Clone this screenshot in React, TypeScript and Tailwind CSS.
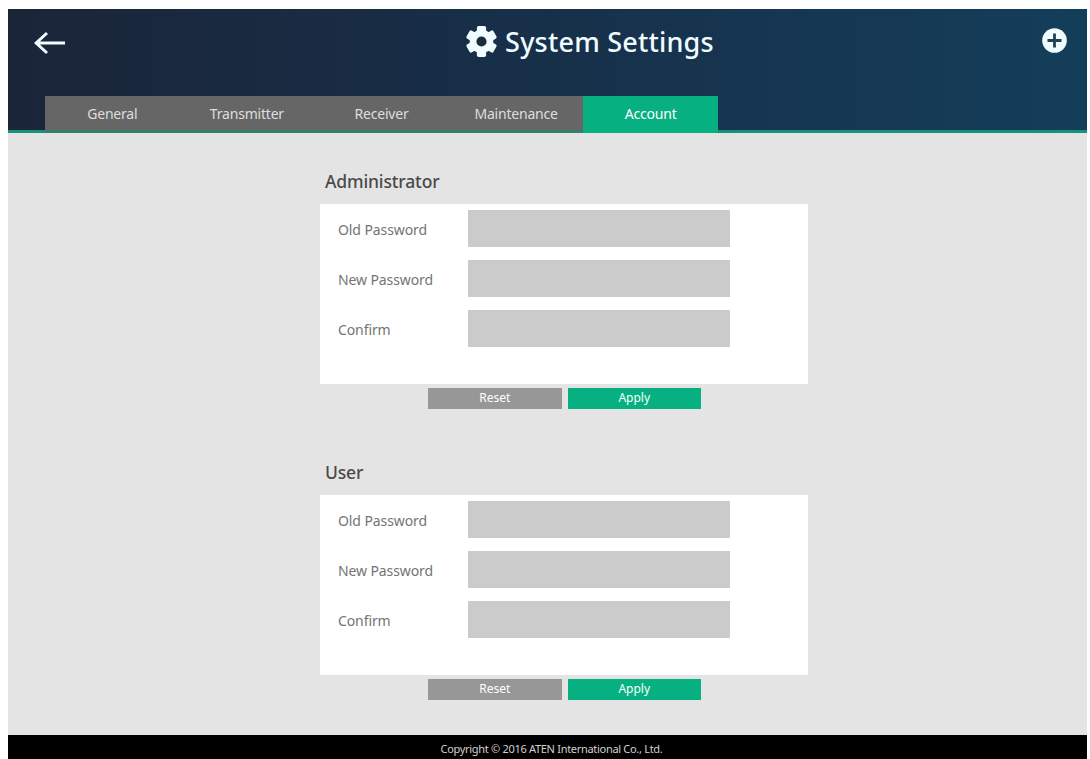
import React from "react";

const tabs = ["General", "Transmitter", "Receiver", "Maintenance", "Account"];
const fields = ["Old Password", "New Password", "Confirm"];

function BackArrow() {
  return (
    <svg className="h-6 w-8" viewBox="0 0 32 24" fill="none" stroke="currentColor" strokeWidth="3">
      <path d="M32 12H3M14 2L3.2 12 14 22" />
    </svg>
  );
}

function Gear() {
  return (
    <svg className="size-[31px]" viewBox="-15.5 -15.5 31 31">
      <g fill="currentColor">
        <rect x="-4.6" y="-15.5" width="9.2" height="31" rx="1.8" />
        <rect x="-4.6" y="-15.5" width="9.2" height="31" rx="1.8" transform="rotate(60)" />
        <rect x="-4.6" y="-15.5" width="9.2" height="31" rx="1.8" transform="rotate(120)" />
        <circle r="11.8" />
      </g>
      <circle r="5.1" fill="#182c3e" />
    </svg>
  );
}

function PlusBadge() {
  return (
    <svg className="size-[25px]" viewBox="0 0 25 25">
      <circle cx="12.5" cy="12.5" r="12.3" fill="#f0fcff" />
      <path d="M12.5 5.5v14M5.5 12.5h14" stroke="#1d4450" strokeWidth="2.8" />
    </svg>
  );
}

function PasswordSection({ title }: { title: string }) {
  return (
    <section className="h-[291px] w-[488px] shrink-0">
      <h2 className="flex h-[45px] items-center pl-[5px] text-[17.5px] leading-none font-medium tracking-[-0.15px] text-[#4a4a4a]">
        {title}
      </h2>
      <div className="flex h-[180px] flex-col gap-[13px] bg-white pt-[5.5px]">
        {fields.map((label) => (
          <label key={label} className="flex h-[37.3px] items-center">
            <span className="w-[148px] pl-[18px] pt-[3px] text-[14px] leading-none tracking-[-0.1px] text-[#747474]">{label}</span>
            <input type="password" className="h-full w-[262px] bg-[#cbcbcb] outline-none" />
          </label>
        ))}
      </div>
      <div className="flex gap-[6px] pt-[3.5px] pl-[108px] text-[12px] text-white">
        <button className="h-[21px] w-[133.5px] bg-[#979797] leading-none">Reset</button>
        <button className="h-[21px] w-[133.5px] bg-[#06b080] leading-none">Apply</button>
      </div>
    </section>
  );
}

export default function App() {
  return (
    <div className="h-[759px] w-[1090px] overflow-hidden bg-white pt-[9px] pr-[3px] pl-2 font-['Noto_Sans','Open_Sans',sans-serif]">
      <div className="flex h-[750px] flex-col bg-[#e4e4e4]">
        <header className="flex h-[124px] shrink-0 flex-col justify-between border-b-[3px] border-[#16927a] bg-linear-to-r from-[#1a2538] via-[#17304a] to-[#133e5a]">
          <div className="flex h-[63px] items-center justify-between pr-[20.5px] pl-[25px] text-[#f0fcff]">
            <button aria-label="Back" className="pt-1">
              <BackArrow />
            </button>
            <h1 className="ml-[73px] flex items-center gap-[8.5px] pt-[2px] text-[27px] leading-none font-medium tracking-[0.2px]">
              <Gear />
              <span>System Settings</span>
            </h1>
            <button aria-label="Add">
              <PlusBadge />
            </button>
          </div>
          <nav className="-mb-[3px] ml-[37px] flex h-[37px] w-[673px]">
            {tabs.map((tab) => (
              <button
                key={tab}
                className={
                  tab === "Account"
                    ? "flex-1 border-b-[3px] border-[#06b080] bg-[#06b080] text-[14px] tracking-[-0.2px] text-white"
                    : "flex-1 border-b-[3px] border-[#35806a] bg-[#666] text-[14px] tracking-[-0.2px] text-[#dedede]"
                }
              >
                {tab}
              </button>
            ))}
          </nav>
        </header>
        <main className="flex min-h-0 flex-1 flex-col pt-[26px] pl-[312px]">
          <PasswordSection title="Administrator" />
          <PasswordSection title="User" />
        </main>
        <footer className="flex h-6 shrink-0 items-center justify-center bg-black pt-[3px] pl-2 text-[11px] leading-none tracking-[-0.3px] text-[#d0d0d0]">
          Copyright © 2016 ATEN International Co., Ltd.
        </footer>
      </div>
    </div>
  );
}
